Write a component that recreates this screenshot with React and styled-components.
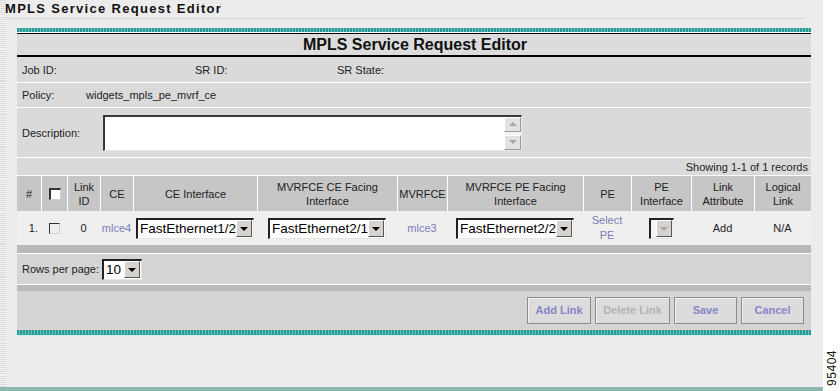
import React from 'react';
import styled, { createGlobalStyle } from 'styled-components';

const GlobalStyle = createGlobalStyle`
  html, body {
    margin: 0;
    padding: 0;
    background: #ffffff;
    overflow: hidden;
  }
  * {
    box-sizing: border-box;
  }
`;

const Page = styled.div`
  display: flex;
  width: 840px;
  height: 391px;
  font-family: 'Liberation Sans', Arial, sans-serif;
  color: #222;
`;

const Main = styled.div`
  width: 823px;
  height: 391px;
  display: flex;
  flex-direction: column;
  background: #ececec;
  border-left: 6px solid transparent;
  border-image: repeating-linear-gradient(180deg, #dcdcdc 0 1px, #f2f2f2 1px 2px) 6;
`;

const TopTitle = styled.div`
  height: 19px;
  padding: 2px 0 0 0;
  margin-left: -1px;
  font-size: 13px;
  font-weight: 700;
  letter-spacing: 1.3px;
  line-height: 14px;
  color: #111;
  border-bottom: 1px solid #cfdadd;
  margin-right: 18px;
`;

const Panel = styled.div`
  margin: 9px 0 0 11px;
  width: 794px;
  display: flex;
  flex-direction: column;
`;

const TealBar = styled.div`
  height: ${(p) => p.h || 5}px;
  background: repeating-linear-gradient(90deg, #2b9a96 0 2px, #6cc4bf 2px 3px);
  border-top: ${(p) => (p.bottom ? '1px solid #e6cfcf' : 'none')};
  border-bottom: 1px solid ${(p) => (p.bottom ? '#c9eeee' : '#ffffff')};
`;

const Header = styled.div`
  height: 24px;
  border-top: 1px solid #000;
  border-bottom: 2px solid #000;
  background: #dcdcdc;
  display: flex;
  align-items: center;
  justify-content: center;
  font-size: 16px;
  font-weight: 700;
  color: #111;
  padding-left: 2px;
`;

const Row = styled.div`
  height: ${(p) => p.h}px;
  background: ${(p) => p.bg || '#dadada'};
  border-bottom: ${(p) => (p.noLine ? 'none' : '1px solid #ffffff')};
  display: flex;
  align-items: center;
  justify-content: ${(p) => p.justify || 'flex-start'};
  padding: 0 ${(p) => p.pr || 0}px 0 5px;
  font-size: 11px;
`;

const Label = styled.span`
  width: ${(p) => p.w}px;
  flex-shrink: 0;
`;

const TextArea = styled.div`
  width: 419px;
  height: 36px;
  margin-left: 1px;
  display: flex;
  background: #fff;
  border-top: 2px solid #3a3a3a;
  border-left: 2px solid #3a3a3a;
  border-right: 1px solid #e8e8e8;
  border-bottom: 1px solid #e8e8e8;
`;

const TextField = styled.div`
  flex: 1;
`;

const ScrollCol = styled.div`
  width: 17px;
  display: flex;
  flex-direction: column;
  justify-content: space-between;
  background: #f4f4f4;
`;

const ScrollBtn = styled.div`
  height: 15px;
  background: #e2e2e2;
  border-top: 1px solid #fff;
  border-left: 1px solid #fff;
  border-right: 1px solid #9a9a9a;
  border-bottom: 1px solid #9a9a9a;
  display: flex;
  align-items: center;
  justify-content: center;
  &::after {
    content: '';
    border-left: 4px solid transparent;
    border-right: 4px solid transparent;
    ${(p) => (p.up ? 'border-bottom' : 'border-top')}: 4px solid #a8a8a8;
  }
`;

const Grid = styled.div`
  display: grid;
  grid-template-columns: 24px 26px 33px 33px 124px 140px 50px 136px 48px 60px 63px 57px;
  height: ${(p) => p.h}px;
  background: ${(p) => p.bg};
`;

const Th = styled.div`
  display: flex;
  align-items: center;
  justify-content: center;
  text-align: center;
  font-size: 11px;
  line-height: 14px;
  color: #222;
  border-left: ${(p) => (p.first ? 'none' : '1px solid #ffffff')};
`;

const Td = styled.div`
  display: flex;
  align-items: center;
  justify-content: ${(p) => p.align || 'center'};
  padding-right: ${(p) => p.pr || 0}px;
  text-align: center;
  font-size: 11px;
  line-height: 15px;
  color: ${(p) => (p.link ? '#7c7cb8' : '#222')};
`;

const Check = styled.span`
  display: inline-block;
  width: ${(p) => (p.head ? 12 : 11)}px;
  height: ${(p) => (p.head ? 12 : 11)}px;
  background: ${(p) => (p.head ? '#fff' : '#efefef')};
  border-top: ${(p) => (p.head ? 2 : 1)}px solid #333;
  border-left: ${(p) => (p.head ? 2 : 1)}px solid #333;
  border-right: 1px solid #d0d0d0;
  border-bottom: 1px solid #d0d0d0;
`;

const SelectBox = styled.div`
  width: ${(p) => p.w}px;
  height: 21px;
  display: flex;
  align-items: center;
  background: ${(p) => (p.disabled ? '#f4f4f4' : '#fff')};
  border-top: 2px solid #222;
  border-left: 2px solid #222;
  border-right: 1px solid #e6e6e6;
  border-bottom: 1px solid #e6e6e6;
`;

const SelectText = styled.span`
  flex: 1;
  padding-left: 2px;
  font-size: 13.5px;
  color: #000;
  white-space: nowrap;
  overflow: hidden;
`;

const ArrowBtn = styled.span`
  width: 16px;
  height: 17px;
  margin-right: 1px;
  background: #d6d3ce;
  border-top: 1px solid #fff;
  border-left: 1px solid #fff;
  border-right: 1px solid #555;
  border-bottom: 1px solid #555;
  display: flex;
  align-items: center;
  justify-content: center;
  &::after {
    content: '';
    border-left: 4px solid transparent;
    border-right: 4px solid transparent;
    border-top: 4px solid ${(p) => (p.disabled ? '#a8a8a8' : '#000')};
  }
`;

const Select = ({ w, value, disabled }) => (
  <SelectBox w={w} disabled={disabled}>
    <SelectText>{value}</SelectText>
    <ArrowBtn disabled={disabled} />
  </SelectBox>
);

const GreyBar = styled.div`
  height: ${(p) => p.h}px;
  background: #b9b9b9;
  border-bottom: ${(p) => (p.line ? '1px solid #fff' : 'none')};
`;

const ButtonRow = styled.div`
  height: 38px;
  background: #d4d4d4;
  display: flex;
  justify-content: flex-end;
  align-items: center;
  gap: 4px;
  padding-right: 7px;
`;

const Button = styled.div`
  width: ${(p) => p.w}px;
  height: 27px;
  display: flex;
  align-items: center;
  justify-content: center;
  background: #dcdcdc;
  border: 1px solid #8c8c8c;
  box-shadow: inset 1px 1px 0 #f2f2f2;
  font-size: 11px;
  font-weight: 700;
  color: ${(p) => (p.disabled ? '#b4b4b4' : '#8686c6')};
`;

const Fill = styled.div`
  flex: 1;
`;

const BottomLine = styled.div`
  height: 4px;
  background: #8cb8b0;
  margin-left: -6px;
`;

const Side = styled.div`
  width: 17px;
  display: flex;
  align-items: flex-end;
  justify-content: center;
  padding-bottom: 5px;
`;

const FigNum = styled.span`
  writing-mode: vertical-rl;
  transform: rotate(180deg);
  font-size: 12px;
  color: #111;
  letter-spacing: 0.5px;
`;

const heads = [
  '#',
  null,
  ['Link', 'ID'],
  'CE',
  'CE Interface',
  ['MVRFCE CE Facing', 'Interface'],
  'MVRFCE',
  ['MVRFCE PE Facing', 'Interface'],
  'PE',
  ['PE', 'Interface'],
  ['Link', 'Attribute'],
  ['Logical', 'Link'],
];

const App = () => {
  return (
    <Page>
      <GlobalStyle />
      <Main>
        <TopTitle>MPLS Service Request Editor</TopTitle>
        <Panel>
          <TealBar />
          <Header>MPLS Service Request Editor</Header>
          <Row h={26}>
            <Label w={173}>Job ID:</Label>
            <Label w={142}>SR ID:</Label>
            <Label w={100}>SR State:</Label>
          </Row>
          <Row h={25}>
            <Label w={64}>Policy:</Label>
            <span>widgets_mpls_pe_mvrf_ce</span>
          </Row>
          <Row h={50}>
            <Label w={80}>Description:</Label>
            <TextArea>
              <TextField />
              <ScrollCol>
                <ScrollBtn up />
                <ScrollBtn />
              </ScrollCol>
            </TextArea>
          </Row>
          <Row h={18} justify="flex-end" pr={3}>
            Showing 1-1 of 1 records
          </Row>
          <Grid h={35} bg="#c6c6c6">
            {heads.map((h, i) => (
              <Th key={i} first={i === 0}>
                {h === null ? (
                  <Check head />
                ) : Array.isArray(h) ? (
                  <span>
                    {h[0]}
                    <br />
                    {h[1]}
                  </span>
                ) : (
                  h
                )}
              </Th>
            ))}
          </Grid>
          <Grid h={34} bg="#efefef">
            <Td align="flex-end" pr={3}>1.</Td>
            <Td>
              <Check />
            </Td>
            <Td>0</Td>
            <Td link>mlce4</Td>
            <Td>
              <Select w={118} value="FastEthernet1/2" />
            </Td>
            <Td>
              <Select w={118} value="FastEthernet2/1" />
            </Td>
            <Td link>mlce3</Td>
            <Td>
              <Select w={118} value="FastEthernet2/2" />
            </Td>
            <Td link>
              Select
              <br />
              PE
            </Td>
            <Td>
              <Select w={25} value="" disabled />
            </Td>
            <Td>Add</Td>
            <Td>N/A</Td>
          </Grid>
          <GreyBar h={9} line />
          <Row h={31} bg="#d4d4d4">
            <Label w={80}>Rows per page:</Label>
            <Select w={40} value="10" />
          </Row>
          <GreyBar h={6} />
          <ButtonRow>
            <Button w={64}>Add Link</Button>
            <Button w={75} disabled>
              Delete Link
            </Button>
            <Button w={63}>Save</Button>
            <Button w={63}>Cancel</Button>
          </ButtonRow>
          <TealBar bottom h={7} />
        </Panel>
        <Fill />
        <BottomLine />
      </Main>
      <Side>
        <FigNum>95404</FigNum>
      </Side>
    </Page>
  );
};

export default App;
